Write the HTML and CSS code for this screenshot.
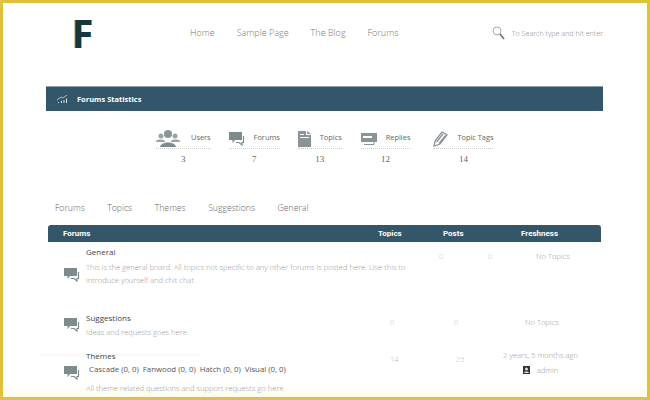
FILE: index.html
```html
<!DOCTYPE html>
<html lang="en">
<head>
    <meta charset="UTF-8" />
    <meta name="viewport" content="width=device-width, initial-scale=1" />
    <title>Forums</title>
    <link rel="stylesheet" href="styles.css">
</head>
<body>
    <svg class="icon-defs" width="0" height="0">
        <symbol id="bubbles" viewBox="0 0 16 16">
            <path fill="#7f8a8d" d="M0 1h13v8H6L3.500 12V9H0z"/>
            <path fill="none" stroke="#7f8a8d" stroke-width="1.200" d="M14.500 5v6.500H13V14l-3-2.500H7"/>
        </symbol>
    </svg>

    <div class="frame">
        <header class="site-header">
            <div class="logo">F</div>
            <nav class="main-nav">
                <a href="#">Home</a>
                <a href="#">Sample Page</a>
                <a href="#">The Blog</a>
                <a href="#">Forums</a>
            </nav>
            <div class="search">
                <svg width="13" height="14" viewBox="0 0 13 14">
                    <circle cx="5" cy="5" r="4" fill="none" stroke="#aaa" stroke-width="1"/>
                    <path d="M8 8l4 5" stroke="#777" stroke-width="1.800"/>
                </svg>
                <span>To Search type and hit enter</span>
            </div>
        </header>

        <section class="stats-bar">
            <svg width="11" height="8" viewBox="0 0 11 8">
                <path d="M0 5l4-3 2 1 4-3" fill="none" stroke="#cfd8dc" stroke-width=".8"/>
                <path d="M1 7h1v1H1zM4 6h1v2H4zM6.500 5h1v3h-1zM9 3.500h1V8H9z" fill="#dfe6e9"/>
            </svg>
            <span>Forums Statistics</span>
        </section>

        <section class="stats">
            <div class="stat stat-users">
                <div class="stat-top">
                    <svg class="stat-icon" width="24" height="19" viewBox="0 0 24 19">
                        <circle cx="5" cy="7" r="2.500" fill="#9aa3a6"/>
                        <circle cx="19" cy="7" r="2.500" fill="#9aa3a6"/>
                        <path d="M0 12c1-2 8-2 9 0v1H0zM15 12c1-2 8-2 9 0v1h-9z" fill="#9aa3a6"/>
                        <circle cx="12" cy="5" r="4" fill="#8a9497"/>
                        <path d="M4 18c1-6 15-6 16 0z" fill="#7f8a8d"/>
                    </svg>
                    <span class="stat-label">Users</span>
                </div>
                <div class="stat-num">3</div>
            </div>
            <div class="stat stat-forums">
                <div class="stat-top">
                    <svg class="stat-icon" width="16" height="16"><use href="#bubbles"/></svg>
                    <span class="stat-label">Forums</span>
                </div>
                <div class="stat-num">7</div>
            </div>
            <div class="stat stat-topics">
                <div class="stat-top">
                    <svg class="stat-icon" width="13" height="16" viewBox="0 0 13 16">
                        <path d="M0 0h8v4h5v12H0z" fill="#8a9497"/>
                        <path d="M9 0l4 3H9z" fill="#8a9497"/>
                        <path d="M2 3h4v1H2zM2 6h9v1H2z" fill="#fff"/>
                    </svg>
                    <span class="stat-label">Topics</span>
                </div>
                <div class="stat-num">13</div>
            </div>
            <div class="stat stat-replies">
                <div class="stat-top">
                    <svg class="stat-icon" width="16" height="13" viewBox="0 0 16 13">
                        <path d="M0 1h16v9H0z" fill="#8a9497"/>
                        <path d="M2 4h9v2H2z" fill="#fff"/>
                        <path d="M13 10v2.500H3" fill="none" stroke="#8a9497"/>
                    </svg>
                    <span class="stat-label">Replies</span>
                </div>
                <div class="stat-num">12</div>
            </div>
            <div class="stat stat-tags">
                <div class="stat-top">
                    <svg class="stat-icon" width="15" height="16" viewBox="0 0 15 16">
                        <path d="M1 15l1-5 7-9 5 3-7 9z" fill="none" stroke="#8a9497" stroke-width="1.300"/>
                        <path d="M3.500 11l6.500-8M6 12.500l6.500-8" stroke="#8a9497" stroke-width="1.200"/>
                    </svg>
                    <span class="stat-label">Topic Tags</span>
                </div>
                <div class="stat-num">14</div>
            </div>
        </section>

        <nav class="tabs">
            <a href="#">Forums</a>
            <a href="#">Topics</a>
            <a href="#">Themes</a>
            <a href="#">Suggestions</a>
            <a href="#">General</a>
        </nav>

        <section class="forums">
            <div class="forums-head">
                <span class="head-name">Forums</span>
                <span class="head-topics">Topics</span>
                <span class="head-posts">Posts</span>
                <span class="head-fresh">Freshness</span>
            </div>

            <div class="forum forum-general">
                <svg class="forum-icon" width="16" height="16"><use href="#bubbles"/></svg>
                <div class="forum-main">
                    <h3>General</h3>
                    <p>This is the general board. All topics not specific to any other forums is posted here. Use this to introduce yourself and chit chat</p>
                </div>
                <span class="num num-topics">0</span>
                <span class="num num-posts">0</span>
                <span class="fresh">No Topics</span>
            </div>

            <div class="forum forum-suggestions">
                <svg class="forum-icon" width="16" height="16"><use href="#bubbles"/></svg>
                <div class="forum-main">
                    <h3>Suggestions</h3>
                    <p>Ideas and requests goes here.</p>
                </div>
                <span class="num num-topics">0</span>
                <span class="num num-posts">0</span>
                <span class="fresh">No Topics</span>
            </div>

            <div class="forum forum-themes">
                <svg class="forum-icon" width="16" height="16"><use href="#bubbles"/></svg>
                <div class="forum-main">
                    <h3>Themes</h3>
                    <div class="subforums">Cascade (0, 0) &nbsp;Fanwood (0, 0) &nbsp;Hatch (0, 0) &nbsp;Visual (0, 0)</div>
                    <p>All theme related questions and support requests go here</p>
                </div>
                <span class="num num-topics">14</span>
                <span class="num num-posts">25</span>
                <div class="fresh">
                    <div>2 years, 5 months ago</div>
                    <div class="fresh-user">
                        <svg width="7" height="8" viewBox="0 0 7 8">
                            <path d="M0 0h7v8H0z" fill="#333"/>
                            <circle cx="3.500" cy="3" r="1.500" fill="#ddd"/>
                            <path d="M1 7c.5-2 4.500-2 5 0z" fill="#ddd"/>
                        </svg>
                        <span>admin</span>
                    </div>
                </div>
            </div>
        </section>

        <div class="ghost-line"></div>
    </div>
</body>
</html>
```

FILE: styles.css
```css
/* Reset some default styles */
* {
    margin: 0;
    padding: 0;
    box-sizing: border-box;
}

body {
    width: 650px;
    height: 400px;
    overflow: hidden;
    font-family: 'Open Sans', sans-serif;
    background-color: #fff;
    color: #888;
}

a {
    color: inherit;
    text-decoration: none;
}

.icon-defs {
    position: absolute;
}

.frame {
    position: relative;
    width: 650px;
    height: 400px;
    border: 3px solid #dcc23f;
    box-shadow: inset -4px -9px 0 -1px #fffdf2;
    overflow: hidden;
}

/* Header */
.site-header {
    display: flex;
    align-items: center;
    height: 57px;
    margin-top: 1px;
}

.logo {
    width: 117px;
    padding-left: 69px;
    font-family: 'Open Sans', sans-serif;
    font-size: 39px;
    font-weight: 700;
    line-height: 1;
    color: #17383b;
    text-shadow: -1px 0 0 #4f9a97;
}

.main-nav {
    display: flex;
    gap: 22px;
    margin-left: 70px;
    font-size: 9px;
    font-weight: 300;
    color: #777;
}

.search {
    display: flex;
    align-items: center;
    gap: 7px;
    margin-left: auto;
    margin-right: 44px;
    font-size: 7.200px;
    font-weight: 300;
    color: #888;
}

/* Statistics */
.stats-bar {
    display: flex;
    align-items: center;
    gap: 9px;
    height: 25px;
    margin: 25px 44px 0 43px;
    padding-left: 11px;
    background-color: #33566a;
    border-top: 1px solid #8fa3ae;
    color: #fff;
    font-size: 7.500px;
    font-weight: 700;
}

.stats {
    display: flex;
    height: 73px;
    margin-top: 18px;
    color: #666;
    font-size: 7.400px;
}

.stat-users { margin-left: 153px; }
.stat-forums { margin-left: 18px; }
.stat-topics { margin-left: 18px; }
.stat-replies { margin-left: 19px; }
.stat-tags { margin-left: 23px; }

.stat-top {
    display: flex;
    align-items: center;
    height: 20px;
    border-bottom: 1px dotted #ccc;
}

.stat-icon {
    margin-right: 9px;
}

.stat-users .stat-icon {
    margin-right: 11px;
}

.stat-label {
    white-space: nowrap;
    margin-top: -3px;
}

.stat-num {
    margin-top: 5px;
    text-align: center;
    font-family: 'Liberation Serif', serif;
    font-size: 9px;
}

/* Tabs */
.tabs {
    display: flex;
    gap: 22.500px;
    margin-left: 52px;
    font-size: 8.700px;
    font-weight: 300;
    color: #666;
}

/* Forum list */
.forums {
    margin: 11px 46px 0 45px;
}

.forums-head {
    position: relative;
    height: 17px;
    background-color: #33566a;
    border-radius: 3px 3px 0 0;
    color: #fff;
    font-family: Roboto, sans-serif;
    font-size: 8px;
    font-weight: 700;
    line-height: 17px;
}

.forums-head span {
    position: absolute;
}

.head-name { left: 15px; }
.head-topics { left: 330px; }
.head-posts { left: 395px; }
.head-fresh { left: 473px; }

.forum {
    position: relative;
    font-size: 7.600px;
    font-weight: 300;
    color: #999;
}

.forum h3 {
    font-size: 8px;
    font-weight: 400;
    color: #444;
}

.forum p {
    line-height: 13px;
}

.forum-icon {
    position: absolute;
    left: 16px;
}

.forum-main {
    position: absolute;
    left: 38px;
}

.num, .fresh {
    position: absolute;
}

.forum-general { height: 63px; }
.forum-general .forum-icon { top: 25px; }
.forum-general .forum-main { top: 4px; width: 325px; }
.forum-general p { margin-top: 4px; }
.forum-general .num { top: 9px; color: #bbb; }
.forum-general .num-topics { left: 391px; }
.forum-general .num-posts { left: 440px; }
.forum-general .fresh { top: 9px; left: 488px; }

.forum-suggestions { height: 38px; }
.forum-suggestions .forum-icon { top: 12px; }
.forum-suggestions .forum-main { top: 7px; }
.forum-suggestions p { margin-top: 3px; }
.forum-suggestions .num { top: 12px; color: #bbb; }
.forum-suggestions .num-topics { left: 342px; }
.forum-suggestions .num-posts { left: 406px; }
.forum-suggestions .fresh { top: 12px; left: 477px; }

.forum-themes { height: 40px; }
.forum-themes .forum-icon { top: 22px; }
.forum-themes .forum-main { top: 7px; width: 300px; }
.forum-themes .num { top: 11px; color: #bbb; }
.forum-themes .num-topics { left: 342px; }
.forum-themes .num-posts { left: 408px; }
.forum-themes .fresh { top: 7px; left: 455px; white-space: nowrap; }

.subforums {
    margin: 3px 0 8px 3px;
    color: #555;
    font-size: 7.800px;
    font-weight: 400;
    white-space: nowrap;
}

.fresh-user {
    display: flex;
    align-items: center;
    justify-content: center;
    gap: 7px;
    margin-top: 5px;
}

/* Faint smudge across the Themes row */
.ghost-line {
    position: absolute;
    left: 37px;
    top: 350px;
    width: 160px;
    height: 4px;
    background-color: #fafafa;
    z-index: -1;
}
```
